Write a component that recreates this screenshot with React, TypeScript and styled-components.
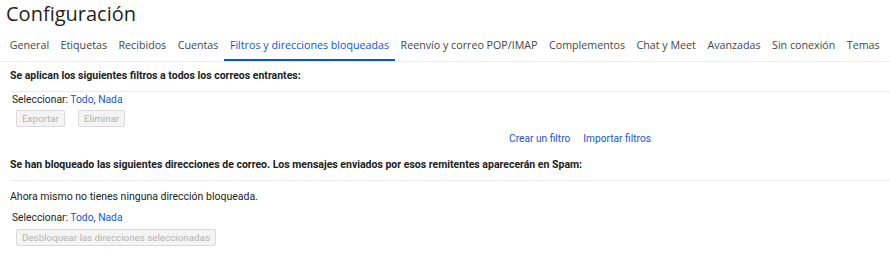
import styled, { createGlobalStyle } from "styled-components";

const GlobalStyle = createGlobalStyle`
  body {
    margin: 0;
    background: #fff;
    font-family: Roboto, "Liberation Sans", Arial, sans-serif;
  }
`;

const Page = styled.div`
  width: 890px;
  height: 255px;
  overflow: hidden;
`;

const Title = styled.h1`
  margin: 0;
  padding: 1px 0 0 6px;
  height: 29px;
  font-family: "Open Sans", Roboto, sans-serif;
  font-size: 20px;
  font-weight: 400;
  color: #1f1f1f;
  line-height: 26px;
`;

const TabBar = styled.nav`
  display: flex;
  padding-left: 4px;
  border-bottom: 1px solid #ececec;
`;

const Tab = styled.div<{ $active?: boolean }>`
  padding: 7px 5.75px 6px;
  font-family: "Open Sans", Roboto, sans-serif;
  font-size: 10.7px;
  line-height: 16px;
  white-space: nowrap;
  color: ${(p) => (p.$active ? "#0b57d0" : "#444746")};
  border-bottom: 2px solid ${(p) => (p.$active ? "#0b57d0" : "transparent")};
`;

const Section = styled.section`
  padding-left: 10px;
  font-size: 10.5px;
  color: #222;
`;

const SectionHeader = styled.div`
  padding: 7px 0 9px;
  font-weight: 700;
  color: #202124;
  border-bottom: 1px solid #ebebeb;
  line-height: 13px;
`;

const Note = styled.div`
  padding-top: 9px;
  line-height: 13px;
`;

const SelectRow = styled.div<{ $top: number }>`
  padding: ${(p) => p.$top}px 0 0 2px;
  font-size: 10.3px;
  line-height: 13px;
`;

const Link = styled.a`
  color: #1a56c8;
  text-decoration: none;
  cursor: pointer;
`;

const ButtonRow = styled.div<{ $top: number }>`
  display: flex;
  gap: 13px;
  padding: ${(p) => p.$top}px 0 0 6px;
`;

const Button = styled.button`
  height: 17px;
  padding: 0 5px;
  font-family: Roboto, "Liberation Sans", Arial, sans-serif;
  font-size: 9.8px;
  color: #b3b3b3;
  background: #f4f4f4;
  border: 1px solid #dadada;
  border-radius: 2px;
  line-height: 15px;
`;

const ActionRow = styled.div`
  display: flex;
  gap: 13px;
  padding: 5px 0 6px 499px;
  font-size: 10.2px;
  line-height: 13px;
`;

const tabs = [
  "General",
  "Etiquetas",
  "Recibidos",
  "Cuentas",
  "Filtros y direcciones bloqueadas",
  "Reenvío y correo POP/IMAP",
  "Complementos",
  "Chat y Meet",
  "Avanzadas",
  "Sin conexión",
  "Temas",
];

const Selector = ({ top }: { top: number }) => (
  <SelectRow $top={top}>
    Seleccionar: <Link>Todo</Link>, <Link>Nada</Link>
  </SelectRow>
);

export default function App() {
  return (
    <Page>
      <GlobalStyle />
      <Title>Configuración</Title>
      <TabBar>
        {tabs.map((t) => (
          <Tab key={t} $active={t.startsWith("Filtros")}>
            {t}
          </Tab>
        ))}
      </TabBar>
      <Section>
        <SectionHeader>Se aplican los siguientes filtros a todos los correos entrantes:</SectionHeader>
        <Selector top={1} />
        <ButtonRow $top={4}>
          <Button disabled>Exportar</Button>
          <Button disabled>Eliminar</Button>
        </ButtonRow>
        <ActionRow>
          <Link>Crear un filtro</Link>
          <Link>Importar filtros</Link>
        </ActionRow>
        <SectionHeader>
          Se han bloqueado las siguientes direcciones de correo. Los mensajes enviados por esos remitentes
          aparecerán en Spam:
        </SectionHeader>
        <Note>Ahora mismo no tienes ninguna dirección bloqueada.</Note>
        <Selector top={8} />
        <ButtonRow $top={5}>
          <Button disabled>Desbloquear las direcciones seleccionadas</Button>
        </ButtonRow>
      </Section>
    </Page>
  );
}
